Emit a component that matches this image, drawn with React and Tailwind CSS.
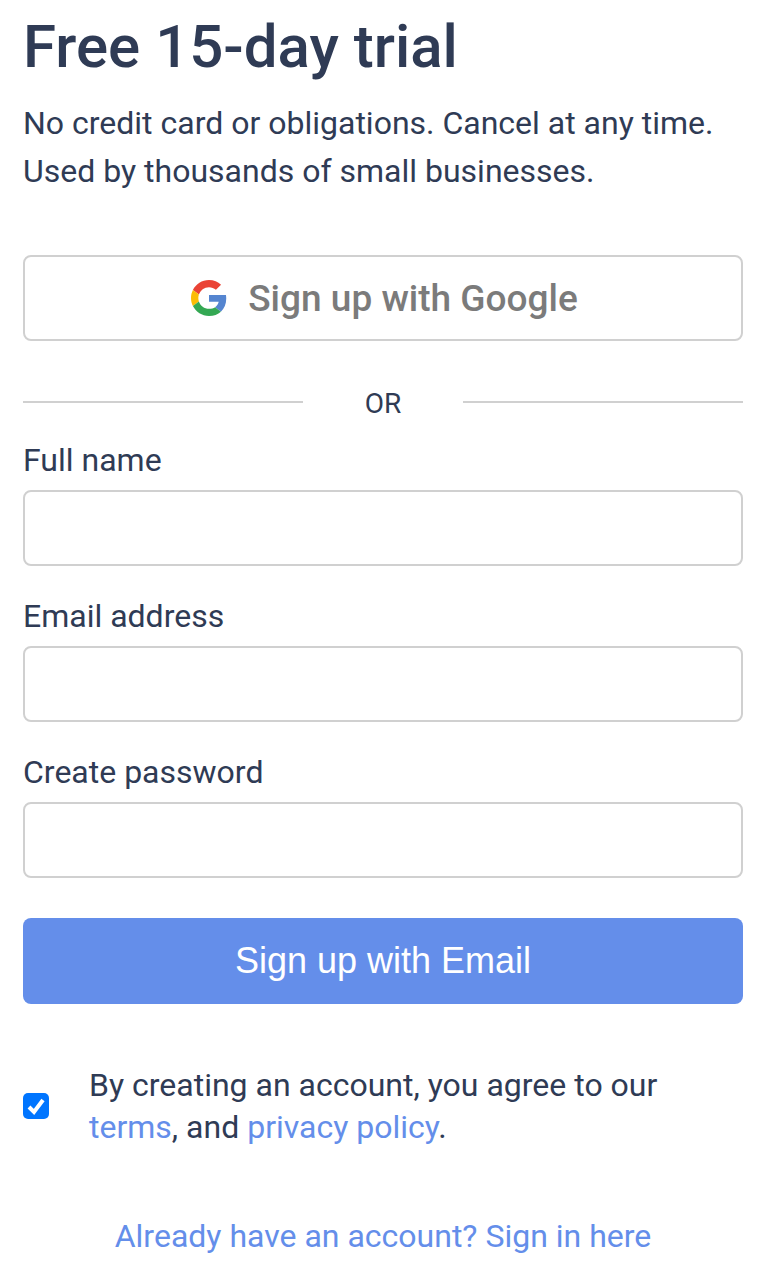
const GoogleLogo = () => (
  <svg viewBox="0 0 48 48" className="w-9 h-9">
    <path fill="#EA4335" d="M24 9.5c3.54 0 6.71 1.22 9.21 3.6l6.85-6.85C35.9 2.38 30.47 0 24 0 14.62 0 6.51 5.38 2.56 13.22l7.98 6.19C12.43 13.72 17.74 9.5 24 9.5z" />
    <path fill="#5585D0" d="M46.98 24.55c0-1.57-.15-3.09-.38-4.55H24v9.02h12.94c-.58 2.96-2.26 5.48-4.78 7.18l7.73 6c4.51-4.18 7.09-10.36 7.09-17.65z" />
    <path fill="#FBBC05" d="M10.53 28.59c-.48-1.45-.76-2.99-.76-4.59s.27-3.14.76-4.59l-7.98-6.19C.92 16.46 0 20.12 0 24c0 3.88.92 7.54 2.56 10.78l7.97-6.19z" />
    <path fill="#34A853" d="M24 48c6.48 0 11.93-2.13 15.89-5.81l-7.73-6c-2.15 1.45-4.92 2.3-8.16 2.3-6.26 0-11.57-4.22-13.47-9.91l-7.98 6.19C6.51 42.62 14.62 48 24 48z" />
  </svg>
);

const Field = ({ label, type }) => (
  <div className="mb-[26px]">
    <label className="block text-[32px] leading-[48px] mb-[6px] text-[#2f3b55]">{label}</label>
    <input type={type} className="block w-full h-[76px] rounded-lg border-2 border-[#d0d0d0] bg-white" />
  </div>
);

export default function App() {
  return (
    <div className="w-[770px] min-h-[1283px] bg-white pl-[23px] font-['Roboto',sans-serif] text-[#2f3b55]">
      <div className="w-[720px]">
        <h1 className="text-[60px] leading-[70px] font-medium pt-[12px]">Free 15-day trial</h1>
        <p className="text-[32px] leading-[48px] mt-[17px]">
          No credit card or obligations. Cancel at any time.
          <br />
          Used by thousands of small businesses.
        </p>

        <button className="flex items-center justify-center gap-[21px] w-full h-[86px] mt-[60px] pl-[3px] rounded-lg border-2 border-[#d0d0d0] bg-white text-[37px] font-medium text-[#7b7b7b]">
          <GoogleLogo />
          <span className="pt-[2px]">Sign up with Google</span>
        </button>

        <div className="flex items-center justify-between mt-[39px] h-[44px]">
          <span className="w-[280px] border-t-2 border-[#d0d0d0]"></span>
          <span className="text-[28px] pt-1">OR</span>
          <span className="w-[280px] border-t-2 border-[#d0d0d0]"></span>
        </div>

        <div className="mt-[12px]">
          <Field label="Full name" type="text" />
          <Field label="Email address" type="email" />
          <Field label="Create password" type="password" />
        </div>

        <button className="block w-full h-[86px] mt-[40px] rounded-lg bg-[#648eea] text-white text-[36px] font-['Liberation_Sans',sans-serif]">
          Sign up with Email
        </button>

        <div className="flex items-center mt-[60px]">
          <div className="relative w-[26px] h-[26px] mr-10">
            <input type="checkbox" defaultChecked className="block appearance-none w-[26px] h-[26px] rounded-[5px] bg-[#0075ff]" />
            <svg viewBox="0 0 26 26" className="absolute inset-0 w-[26px] h-[26px] pointer-events-none">
              <path d="M6 14l5 5 9-12" fill="none" stroke="white" strokeWidth="4" />
            </svg>
          </div>
          <p className="text-[32px] leading-[42px]">
            By creating an account, you agree to our
            <br />
            <a className="text-[#648eea]">terms</a>, and <a className="text-[#648eea]">privacy policy</a>.
          </p>
        </div>

        <p className="text-center text-[32px] leading-[42px] mt-[67px] text-[#648eea]">
          Already have an account? Sign in here
        </p>
      </div>
    </div>
  );
}
